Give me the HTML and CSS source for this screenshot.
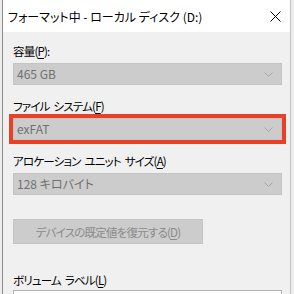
FILE: index.html
```html
<!DOCTYPE html>
<html lang="ja">
<head>
<meta charset="utf-8">
<link rel="stylesheet" href="styles.css">
</head>
<body>
<div class="window">
  <div class="titlebar">
    <span class="title">フォーマット中 - ローカル ディスク (D:)</span>
    <svg class="close" width="11" height="11" viewBox="0 0 11 11"><path d="M0.5 0.5 L10.5 10.5 M10.5 0.5 L0.5 10.5" stroke="#000" stroke-width="1" fill="none"/></svg>
  </div>
  <div class="content">
    <div class="field">
      <div class="label">容量(<u>P</u>):</div>
      <div class="combo"><span>465 GB</span><svg class="chev" width="9" height="5" viewBox="0 0 9 5"><path d="M0.5 0.5 L4.5 4.5 L8.5 0.5" stroke="#a6a6a6" fill="none"/></svg></div>
    </div>
    <div class="field">
      <div class="label">ファイル システム(<u>F</u>)</div>
      <div class="combo highlight"><span>exFAT</span><svg class="chev" width="9" height="5" viewBox="0 0 9 5"><path d="M0.5 0.5 L4.5 4.5 L8.5 0.5" stroke="#a6a6a6" fill="none"/></svg></div>
    </div>
    <div class="field">
      <div class="label">アロケーション ユニット サイズ(<u>A</u>)</div>
      <div class="combo"><span>128 キロバイト</span><svg class="chev" width="9" height="5" viewBox="0 0 9 5"><path d="M0.5 0.5 L4.5 4.5 L8.5 0.5" stroke="#a6a6a6" fill="none"/></svg></div>
    </div>
    <div class="button">デバイスの既定値を復元する(<u>D</u>)</div>
    <div class="field vol">
      <div class="label">ボリューム ラベル(<u>L</u>)</div>
      <div class="textbox"></div>
    </div>
  </div>
</div>
</body>
</html>
```
FILE: styles.css
```css
html, body {
  margin: 0;
  padding: 0;
  background: #ececec;
  width: 294px;
  height: 294px;
  overflow: hidden;
}
body {
  font-family: "Noto Sans CJK JP", "Noto Sans", sans-serif;
  font-feature-settings: "palt";
  font-size: 12px;
  line-height: 16px;
  color: #000;
}
.window {
  margin-left: 2px;
  width: 287px;
  height: 294px;
  border-left: 1px solid #8c8c8c;
  border-right: 1px solid #c4c4c4;
  background: #f0f0f0;
  overflow: hidden;
}
.titlebar {
  height: 32px;
  background: #fff;
  display: flex;
  align-items: center;
  justify-content: space-between;
  padding: 1px 9px 0 5px;
  box-sizing: border-box;
}
.title {
  font-size: 12px;
}
.close {
  display: block;
}
.content {
  padding: 11px 8px 0 10px;
  display: flex;
  flex-direction: column;
}
.field {
  display: flex;
  flex-direction: column;
  gap: 4px;
}
.field + .field {
  margin-top: 13px;
}
.label {
  height: 16px;
  font-size: 11.5px;
  letter-spacing: -0.8px;
  word-spacing: 2px;
}
u {
  text-decoration-thickness: 1px;
  text-underline-offset: 2px;
}
.combo {
  height: 22px;
  box-sizing: border-box;
  background: #cccccc;
  border: 1px solid #c4c4c4;
  color: #707070;
  display: flex;
  align-items: center;
  justify-content: space-between;
  padding: 0 8px 0 3px;
}
.highlight {
  outline: 4px solid #ea4126;
}
.button {
  margin-top: 24px;
  width: 190px;
  height: 25px;
  box-sizing: border-box;
  background: #cccccc;
  border: 1px solid #c4c4c4;
  color: #8a8a8a;
  font-size: 11.5px;
  letter-spacing: -0.8px;
  display: flex;
  align-items: center;
  justify-content: center;
}
.field.vol {
  margin-top: 28px;
  gap: 2px;
}
.textbox {
  height: 22px;
  box-sizing: border-box;
  background: #fff;
  border: 1px solid #b4b4b4;
}
```
